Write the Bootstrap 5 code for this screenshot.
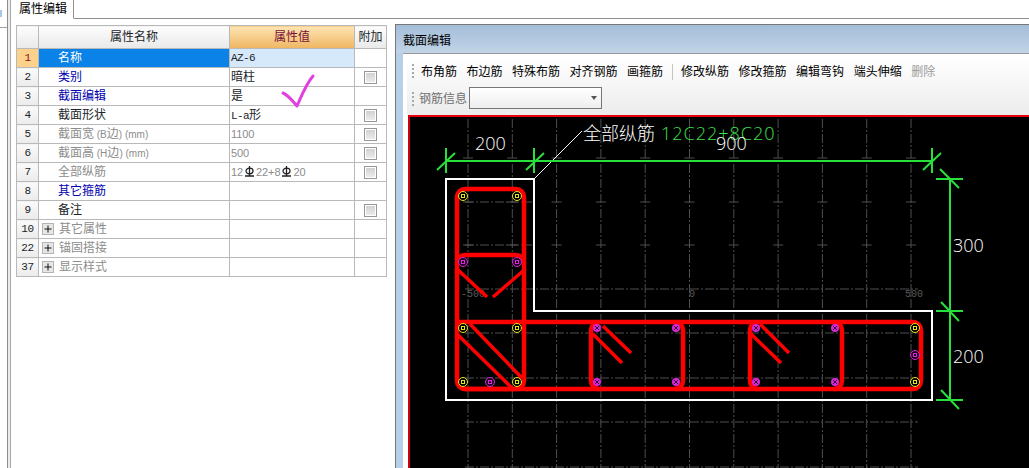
<!DOCTYPE html>
<html lang="zh">
<head>
    <meta charset="UTF-8">
    <meta name="viewport" content="width=device-width, initial-scale=1.0">
    <title>属性编辑</title>
    <link href="https://cdn.jsdelivr.net/npm/bootstrap@5.3.0/dist/css/bootstrap.min.css" rel="stylesheet">
    <style>
        html, body { height: 468px; overflow: hidden; }
        body {
            background: #fff;
            color: #000;
            font-family: "Liberation Sans", "Noto Sans CJK SC", sans-serif;
            font-size: 12px;
            line-height: 1;
        }
        .side-rail { width: 8px; height: 28px; border-bottom: 1px solid #a0a0a0; }
        .side-blip { width: 2px; height: 7px; margin-top: 10px; background: #a9c8e8; }
        .rail-bar { width: 5px; background: #ececec; border-left: 1px solid #8c8c8c; border-right: 1px solid #a8a8a8; }

        .tab-strip { height: 19px; --bs-nav-tabs-border-color: #8f8f8f; --bs-nav-tabs-border-radius: 0; --bs-nav-tabs-border-width: 1px; }
        .tab-strip .nav-link { height: 19px; width: 63px; padding: 3px 0 0 8px; color: #000; border-top: 0; border-left: 0; --bs-nav-tabs-link-active-border-color: #8f8f8f #8f8f8f #fff; }

        .grid-wrap { padding: 6px 0 0 5px; }
        .prop-grid { width: 370px; table-layout: fixed; --bs-table-border-color: #b9b9b9; }
        .prop-grid td, .prop-grid th { height: 19px; padding: 0; vertical-align: middle; font-weight: 400; white-space: nowrap; }
        .prop-grid thead th { height: 23px; text-align: center; background: linear-gradient(#fdfdfd, #e9e9e9); border-top: 0; }
        .prop-grid thead th.val-head { background: linear-gradient(#fde5b4, #efb561); color: #7a1038; }
        .prop-grid .row-no { text-align: center; background: linear-gradient(#fafafa, #ebebeb); font-family: "Liberation Mono", monospace; font-size: 11px; letter-spacing: -.4px; }
        .prop-grid .row-no.is-current { background: #fbd18c; color: #8a1020; }
        .prop-grid .prop-name { padding-left: 19px; }
        .prop-grid .has-toggle { padding-left: 3px; }
        .prop-grid .prop-val { padding-left: 1px; }
        .prop-grid td.is-current-name { background: #0a82e8; color: #fff; }
        .prop-grid td.is-current-val { background: #d5e9fb; }
        .prop-grid .prop-extra { text-align: center; }
        .t-blue { color: #0000ad !important; }
        .t-gray { color: #8c8c8c !important; }
        .latin-val { font-family: "Liberation Mono", monospace; font-size: 11px; letter-spacing: -.6px; }
        .num-val { font-size: 11px; letter-spacing: -.1px; }
        .unit-txt { font-size: 10px; }
        .toggle-box { display: block; flex: none; margin-right: 5px; }
        .rebar-sym { display: inline-block; vertical-align: -1px; margin: 0 2px; }
        .attach-chk.form-check-input {
            width: 13px; height: 13px; opacity: 1; border-radius: 0; vertical-align: middle; float: none;
            border: 1px solid #979797; box-shadow: inset 0 0 0 1px #fff; background: linear-gradient(#cfcfcf, #eee);
        }
        .check-mark { position: absolute; left: 280px; top: 73px; width: 36px; height: 36px; pointer-events: none; }

        .section-panel { width: 634px; margin-top: 5px; margin-left: 8px; background: #b7cfe8; border-left: 1px solid #777; border-top: 1px solid #777; padding-left: 7px; }
        .panel-title { height: 28px; margin-left: -7px; padding: 10px 0 0 7px; background: linear-gradient(#a4bdd9, #c1d4e7); }
        .panel-body { background: #fff; border-top: 1px solid #999; padding: 3px 0 0 5px; min-height: 0; }
        .tool-area { height: 58px; margin-left: -1px; background: linear-gradient(#fff, #ececec); }
        .tool-row { height: 30px; padding-left: 5px; gap: 9.5px; white-space: nowrap; }
        .tool-row > .grip:first-child { margin-right: -2.5px; }
        .tool-row.info-row { height: 28px; gap: 2px; }
        .grip { width: 2px; height: 16px; background: repeating-linear-gradient(#a8a8a8 0 2px, transparent 2px 4px); }
        .tool-sep { width: 1px; height: 16px; background: #c4c4c4; margin: 0 -1px; }
        .tool-off { color: #9a9a9a; }
        .info-label { color: #6f6f6f; width: 48px; margin-top: 6px; }
        .info-row > .grip:first-child { margin-top: 5px; margin-right: 3px; }
        .info-select { width: 133px; height: 22px; padding-right: 4px; border: 1px solid #777; background: linear-gradient(#fff, #eee); }
        .info-arrow { width: 0; height: 0; border: 3px solid transparent; border-top: 4px solid #555; border-bottom: 0; }
        .draw-area { width: 621px; height: 354px; background: #000; border-top: 2.5px solid #e8000c; border-left: 2px solid #d0000c; overflow: hidden; }
        .draw-area svg { display: block; }
        .cad-txt { font-family: "Open Sans", "Noto Sans CJK SC", sans-serif; font-size: 18px; fill: #fff; font-weight: 300; }
        .cad-green { fill: #3fe04e; }
        .cad-axis { font-family: "Liberation Mono", monospace; font-size: 10px; fill: #5a5a5a; }
    </style>
</head>
<body class="d-flex position-relative">
    <div class="side-rail"><div class="side-blip"></div></div>
    <div class="rail-bar"></div>

    <div class="flex-grow-1 d-flex flex-column">
        <ul class="nav nav-tabs tab-strip">
            <li class="nav-item"><a class="nav-link active" href="#">属性编辑</a></li>
        </ul>

        <div class="d-flex flex-grow-1 overflow-hidden">
            <div class="grid-wrap">
                <table class="table table-bordered mb-0 prop-grid">
                    <colgroup><col style="width:22px"><col style="width:191px"><col style="width:125px"><col style="width:32px"></colgroup>
                    <thead>
                        <tr><th></th><th>属性名称</th><th class="val-head">属性值</th><th>附加</th></tr>
                    </thead>
                    <tbody>
                        <tr><td class="row-no is-current">1</td><td class="prop-name is-current-name">名称</td><td class="prop-val is-current-val latin-val">AZ-6</td><td></td></tr>
                        <tr><td class="row-no">2</td><td class="prop-name t-blue">类别</td><td class="prop-val">暗柱</td><td class="prop-extra"><input class="form-check-input attach-chk m-0" type="checkbox" disabled></td></tr>
                        <tr><td class="row-no">3</td><td class="prop-name t-blue">截面编辑</td><td class="prop-val">是</td><td></td></tr>
                        <tr><td class="row-no">4</td><td class="prop-name">截面形状</td><td class="prop-val"><span class="latin-val">L-a</span>形</td><td class="prop-extra"><input class="form-check-input attach-chk m-0" type="checkbox" disabled></td></tr>
                        <tr><td class="row-no">5</td><td class="prop-name t-gray">截面宽<span class="unit-txt"> (B</span>边<span class="unit-txt">) (mm)</span></td><td class="prop-val t-gray num-val">1100</td><td class="prop-extra"><input class="form-check-input attach-chk m-0" type="checkbox" disabled></td></tr>
                        <tr><td class="row-no">6</td><td class="prop-name t-gray">截面高<span class="unit-txt"> (H</span>边<span class="unit-txt">) (mm)</span></td><td class="prop-val t-gray num-val">500</td><td class="prop-extra"><input class="form-check-input attach-chk m-0" type="checkbox" disabled></td></tr>
                        <tr><td class="row-no">7</td><td class="prop-name t-gray">全部纵筋</td>
                            <td class="prop-val t-gray num-val">12<svg class="rebar-sym" width="9" height="11" viewBox="0 0 9 11"><ellipse cx="4.500" cy="5" rx="3.500" ry="2.800" fill="none" stroke="#222" stroke-width="1.300"/><path d="M4.500 0V10M0 10H9" stroke="#222" stroke-width="1.300"/></svg>22+8<svg class="rebar-sym" width="9" height="11" viewBox="0 0 9 11"><ellipse cx="4.500" cy="5" rx="3.500" ry="2.800" fill="none" stroke="#222" stroke-width="1.300"/><path d="M4.500 0V10M0 10H9" stroke="#222" stroke-width="1.300"/></svg>20</td>
                            <td class="prop-extra"><input class="form-check-input attach-chk m-0" type="checkbox" disabled></td></tr>
                        <tr><td class="row-no">8</td><td class="prop-name t-blue">其它箍筋</td><td></td><td></td></tr>
                        <tr><td class="row-no">9</td><td class="prop-name">备注</td><td></td><td class="prop-extra"><input class="form-check-input attach-chk m-0" type="checkbox" disabled></td></tr>
                        <tr><td class="row-no">10</td><td class="has-toggle t-gray"><div class="d-flex align-items-center"><svg class="toggle-box" width="12" height="12" viewBox="0 0 12 12"><rect x=".5" y=".5" width="11" height="11" fill="#e6e6e6" stroke="#b4b4b4"/><path d="M2.5 6H9.500M6 2.500V9.500" stroke="#111"/></svg>其它属性</div></td><td></td><td></td></tr>
                        <tr><td class="row-no">22</td><td class="has-toggle t-gray"><div class="d-flex align-items-center"><svg class="toggle-box" width="12" height="12" viewBox="0 0 12 12"><rect x=".5" y=".5" width="11" height="11" fill="#e6e6e6" stroke="#b4b4b4"/><path d="M2.5 6H9.500M6 2.500V9.500" stroke="#111"/></svg>锚固搭接</div></td><td></td><td></td></tr>
                        <tr><td class="row-no">37</td><td class="has-toggle t-gray"><div class="d-flex align-items-center"><svg class="toggle-box" width="12" height="12" viewBox="0 0 12 12"><rect x=".5" y=".5" width="11" height="11" fill="#e6e6e6" stroke="#b4b4b4"/><path d="M2.5 6H9.500M6 2.500V9.500" stroke="#111"/></svg>显示样式</div></td><td></td><td></td></tr>
                    </tbody>
                </table>
            </div>

            <div class="section-panel d-flex flex-column">
                <div class="panel-title">截面编辑</div>
                <div class="panel-body flex-grow-1">
                    <div class="tool-area">
                        <div class="tool-row d-flex align-items-center">
                            <span class="grip"></span>
                            <span>布角筋</span><span>布边筋</span><span>特殊布筋</span><span>对齐钢筋</span><span>画箍筋</span>
                            <span class="tool-sep"></span>
                            <span>修改纵筋</span><span>修改箍筋</span><span>编辑弯钩</span><span>端头伸缩</span><span class="tool-off">删除</span>
                        </div>
                        <div class="tool-row info-row d-flex">
                            <span class="grip"></span>
                            <span class="info-label">钢筋信息</span>
                            <div class="info-select d-flex align-items-center justify-content-end"><span class="info-arrow"></span></div>
                        </div>
                    </div>
                    <div class="draw-area">
                        <svg id="cad" width="619" height="352" viewBox="410 116 619 352">
                            <g id="grid"></g>
                            <text class="cad-axis" x="461" y="296">-500</text>
                            <text class="cad-axis" x="689" y="296">0</text>
                            <text class="cad-axis" x="905" y="296">500</text>

                            <path d="M446 178H534V310H932V399H446Z" fill="none" stroke="#fff" stroke-width="2"/>
                            <path d="M534 178L582 130" stroke="#fff"/>

                            <g fill="none" stroke="#f00" stroke-width="4.500">
                                <path d="M457 196a8 8 0 0 1 8-8H516a8 8 0 0 1 8 8V380a8 8 0 0 1-8 8H465a8 8 0 0 1-8-8Z"/>
                                <path d="M457 262a8 8 0 0 1 8-8H516a8 8 0 0 1 8 8"/>
                                <path d="M457 321H913a8 8 0 0 1 8 8V380a8 8 0 0 1-8 8H465"/>
                                <path d="M599 321a8 8 0 0 0-8 8V380a8 8 0 0 0 8 8M675 321a8 8 0 0 1 8 8V380a8 8 0 0 1-8 8"/>
                                <path d="M758 321a8 8 0 0 0-8 8V380a8 8 0 0 0 8 8M834 321a8 8 0 0 1 8 8V380a8 8 0 0 1-8 8"/>
                                <g stroke-width="3.500">
                                    <path d="M457 268L487 296M523 270L493 296"/>
                                    <path d="M470 323L522 377M457 333L512 387"/>
                                    <path d="M603 325L631 352M593 333L622 362"/>
                                    <path d="M760 323L789 352M751 333L781 362"/>
                                </g>
                            </g>

                            <g stroke="#28e03c" stroke-width="2" fill="none">
                                <path d="M446 160H932M950 178V399"/>
                                <path d="M446 147V172M437 169L455 152M534 147V172M526 169L544 152M932 147V172M923 169L941 152"/>
                                <path d="M936 178H963M940 168L959 187M936 310H963M941 301L959 320M936 399H963M941 389L959 408"/>
                            </g>
                            <g id="bars"></g>

                            <text class="cad-txt" x="475" y="149">200</text>
                            <text class="cad-txt cad-green" x="661" y="139" letter-spacing="1">12C22+8C20</text>
                            <text class="cad-txt" x="716" y="149">900</text>
                            <text class="cad-txt" x="953" y="251">300</text>
                            <text class="cad-txt" x="953" y="362">200</text>
                            <text class="cad-txt" x="583" y="139">全部纵筋</text>
                        </svg>
                    </div>
                </div>
            </div>
        </div>
    </div>

    <svg class="check-mark" viewBox="280 73 36 36">
        <path d="M283 93C288 95 292 100 297 106C301 97 306 84 313 76" fill="none" stroke="#e23fe0" stroke-width="3" stroke-linecap="round" stroke-linejoin="round"/>
    </svg>

    <script>
        // grid and rebar dots are just repeats, no point listing them by hand
        const NS = 'http://www.w3.org/2000/svg';
        const grid = document.getElementById('grid');
        const bars = document.getElementById('bars');

        function add(parent, tag, attrs) {
            const el = document.createElementNS(NS, tag);
            for (const k in attrs) el.setAttribute(k, attrs[k]);
            parent.appendChild(el);
        }

        for (let i = 0; i <= 10; i++) {
            const x = 468 + i * 44.3;
            add(grid, 'line', { x1: x, y1: 118, x2: x, y2: 468, stroke: '#4e4e4e', 'stroke-dasharray': '9 2 2 2' });
        }
        [332, 377, 421, 466, 288].forEach(function (y) {
            add(grid, 'line', { x1: 465, y1: y, x2: 918, y2: y, stroke: '#4e4e4e', 'stroke-dasharray': '9 2 2 2' });
        });
        [157, 201, 244].forEach(function (y) {
            add(grid, 'line', { x1: 463, y1: y, x2: 918, y2: y, stroke: '#4e4e4e', 'stroke-dasharray': '10 34.3' });
            if (y > 157) add(grid, 'line', { x1: 465, y1: y, x2: 532, y2: y, stroke: '#4e4e4e', 'stroke-dasharray': '9 2 2 2' });
        });

        const yellow = [[463,195],[517,195],[463,327],[517,327],[463,381],[517,381],[915,327],[915,381]];
        const ringed = [[463,261],[517,261],[490,381],[915,354]];
        const filled = [[597,327],[676,327],[597,381],[676,381],[756,327],[835,327],[756,381],[835,381]];

        yellow.forEach(function (p) {
            add(bars, 'circle', { cx: p[0], cy: p[1], r: 4.5, fill: '#000', stroke: '#e6e61e' });
            add(bars, 'rect', { x: p[0] - 1.5, y: p[1] - 1.5, width: 3, height: 3, fill: 'none', stroke: '#e6e61e' });
        });
        ringed.forEach(function (p) {
            add(bars, 'circle', { cx: p[0], cy: p[1], r: 4.5, fill: '#200020', stroke: '#d626d6' });
            add(bars, 'rect', { x: p[0] - 1.5, y: p[1] - 1.5, width: 3, height: 3, fill: 'none', stroke: '#d626d6' });
        });
        filled.forEach(function (p) {
            add(bars, 'circle', { cx: p[0], cy: p[1], r: 4, fill: '#d626d6' });
            add(bars, 'path', { d: 'M' + (p[0]-2) + ' ' + (p[1]-2) + 'l4 4m0-4l-4 4', stroke: '#300030' });
        });
    </script>
    <script src="https://cdn.jsdelivr.net/npm/bootstrap@5.3.0/dist/js/bootstrap.bundle.min.js"></script>
</body>
</html>
